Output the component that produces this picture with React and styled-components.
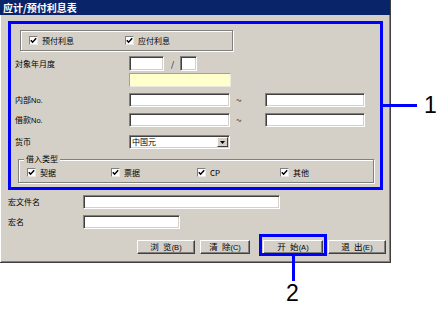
import React from 'react';
import styled, { createGlobalStyle } from 'styled-components';

const GlobalStyle = createGlobalStyle`
  html, body { margin: 0; padding: 0; background: #fff; }
  body { font-family: "Noto Sans CJK SC", "Noto Sans", sans-serif; color: #000; }
`;

const Page = styled.div`
  position: relative;
  width: 436px;
  height: 309px;
  background: #fff;
  overflow: hidden;
`;

const Window = styled.div`
  width: 391px;
  height: 263px;
  box-sizing: border-box;
  background: #d4d0c8;
  border-right: 1px solid #404040;
  border-bottom: 1px solid #404040;
  box-shadow: inset -1px -1px 0 #808080;
  display: flex;
  flex-direction: column;
`;

const TitleBar = styled.div`
  height: 15px;
  background: #0a246a;
  color: #fff;
  font-size: 10px;
  font-weight: bold;
  line-height: 15px;
  padding-left: 3px;
  white-space: nowrap;
`;

const Body = styled.div`
  flex: 1;
  border-left: 1px solid #fff;
  padding: 6px 0 0 7px;
  display: flex;
  flex-direction: column;
`;

const Highlight = styled.div`
  width: 375px;
  height: 169px;
  box-sizing: border-box;
  border: 3px solid #0000ff;
  padding: 6px 0 0 4px;
  display: flex;
  flex-direction: column;
`;

const CheckGroup = styled.div`
  width: 213px;
  height: 21px;
  box-sizing: border-box;
  margin-left: 5px;
  border: 1px solid #808080;
  box-shadow: 1px 1px 0 #fff, inset 1px 1px 0 #fff;
  display: flex;
  align-items: center;
  padding-left: 8px;
`;

const CheckItem = styled.div`
  width: ${p => p.$w}px;
  display: flex;
  align-items: center;
  gap: 4px;
  font-size: 8px;
  line-height: 10px;
  white-space: nowrap;
`;

const Box = styled.span`
  width: 9px;
  height: 9px;
  box-sizing: border-box;
  background: #fff;
  border: 1px solid;
  border-color: #808080 #e8e8e8 #e8e8e8 #808080;
  display: inline-flex;
  align-items: center;
  justify-content: center;
  flex: none;
`;

const Row = styled.div`
  display: flex;
  align-items: center;
  margin-top: ${p => p.$mt}px;
`;

const Label = styled.div`
  width: ${p => p.$w}px;
  flex: none;
  font-size: 8px;
  line-height: 10px;
  white-space: nowrap;
`;

const Small = styled.span`
  font-size: 7.5px;
  font-family: "Liberation Sans", sans-serif;
`;

const Field = styled.div`
  width: ${p => p.$w}px;
  height: ${p => p.$h || 14}px;
  box-sizing: border-box;
  background: #fff;
  border: 1px solid;
  border-color: #808080 #fff #fff #808080;
  box-shadow: inset 1px 1px 0 #404040, inset -1px -1px 0 #d4d0c8;
  flex: none;
`;

const YellowField = styled.div`
  width: ${p => p.$w}px;
  height: 14px;
  box-sizing: border-box;
  background: #ffffcc;
  border: 1px solid;
  border-color: #a0a0a0 #e8e8e0 #e8e8e0 #a0a0a0;
`;

const Sep = styled.div`
  width: ${p => p.$w}px;
  flex: none;
  font-size: ${p => p.$fs || 8}px;
  line-height: 10px;
  padding-left: ${p => p.$pl}px;
  box-sizing: border-box;
  color: ${p => p.$c || '#000'};
`;

const Select = styled(Field)`
  display: flex;
  align-items: center;
  justify-content: space-between;
  padding: 0 1px 0 2px;
  font-size: 8px;
  line-height: 10px;
`;

const DropBtn = styled.span`
  width: 11px;
  height: 10px;
  box-sizing: border-box;
  background: #d4d0c8;
  border: 1px solid;
  border-color: #fff #404040 #404040 #fff;
  display: flex;
  align-items: center;
  justify-content: center;
`;

const GroupBox = styled.div`
  position: relative;
  width: 356px;
  height: 24px;
  box-sizing: border-box;
  margin: 10px 0 0 3px;
  border: 1px solid #808080;
  box-shadow: 1px 1px 0 #fff, inset 1px 1px 0 #fff;
  display: flex;
  align-items: center;
  padding: 3px 0 0 8px;
`;

const Legend = styled.span`
  position: absolute;
  top: -6px;
  left: 5px;
  padding: 0 2px;
  background: #d4d0c8;
  font-size: 8px;
  line-height: 10px;
`;

const Buttons = styled.div`
  display: flex;
  align-items: center;
  margin: 11px 0 0 129px;
`;

const Button = styled.div`
  position: relative;
  width: ${p => p.$w}px;
  height: 14px;
  margin-left: ${p => p.$ml || 0}px;
  box-sizing: border-box;
  background: #d4d0c8;
  border: 1px solid;
  border-color: #fff #404040 #404040 #fff;
  box-shadow: inset -1px -1px 0 #808080;
  font-size: 8.5px;
  line-height: 11px;
  display: flex;
  align-items: center;
  justify-content: center;
  white-space: nowrap;
  flex: none;
`;

const ButtonMark = styled.span`
  position: absolute;
  left: -5px;
  right: -5px;
  top: -7px;
  bottom: -3px;
  border: 3px solid #0000ff;
`;

const CalloutLine = styled.div`
  position: absolute;
  left: ${p => p.$x}px;
  top: ${p => p.$y}px;
  width: ${p => p.$w}px;
  height: ${p => p.$h}px;
  background: #0000ff;
`;

const CalloutNum = styled.div`
  position: absolute;
  left: ${p => p.$x}px;
  top: ${p => p.$y}px;
  font-family: "Liberation Sans", Arial, sans-serif;
  font-size: 23px;
  line-height: 23px;
  color: #000;
`;

const Check = () => (
  <Box>
    <svg width="7" height="7" viewBox="0 0 7 7">
      <path d="M0.8 3.2 L2.6 5.2 L6.2 1.2" fill="none" stroke="#000" strokeWidth="1.5" />
    </svg>
  </Box>
);

const Checked = ({ w, children }) => (
  <CheckItem $w={w}>
    <Check />
    <span>{children}</span>
  </CheckItem>
);

const App = () => (
  <Page>
    <GlobalStyle />
    <Window>
      <TitleBar>应计/预付利息表</TitleBar>
      <Body>
        <Highlight>
          <CheckGroup>
            <Checked w={96}>预付利息</Checked>
            <Checked w={90}>应付利息</Checked>
          </CheckGroup>

          <Row $mt={5}>
            <Label $w={114}>対象年月度</Label>
            <Field $w={35} $h={15} />
            <Sep $w={16} $pl={7}>/</Sep>
            <Field $w={17} $h={15} />
          </Row>
          <Row $mt={2}>
            <Label $w={114} />
            <YellowField $w={102} />
          </Row>
          <Row $mt={6}>
            <Label $w={114}>内部<Small>No.</Small></Label>
            <Field $w={101} />
            <Sep $w={35} $pl={6} $fs={10} $c="#404040">~</Sep>
            <Field $w={100} />
          </Row>
          <Row $mt={6}>
            <Label $w={114}>借款<Small>No.</Small></Label>
            <Field $w={101} />
            <Sep $w={35} $pl={6} $fs={10} $c="#404040">~</Sep>
            <Field $w={100} />
          </Row>
          <Row $mt={8}>
            <Label $w={114}>货币</Label>
            <Select $w={101} $h={14}>
              <span>中国元</span>
              <DropBtn>
                <svg width="5" height="3" viewBox="0 0 5 3">
                  <path d="M0 0 H5 L2.5 3 Z" fill="#000" />
                </svg>
              </DropBtn>
            </Select>
          </Row>

          <GroupBox>
            <Legend>借入类型</Legend>
            <Checked w={84}>契据</Checked>
            <Checked w={86}>票据</Checked>
            <Checked w={83}>CP</Checked>
            <Checked w={60}>其他</Checked>
          </GroupBox>
        </Highlight>

        <Row $mt={5}>
          <Label $w={75}>宏文件名</Label>
          <Field $w={197} />
        </Row>
        <Row $mt={6}>
          <Label $w={75}>宏名</Label>
          <Field $w={97} />
        </Row>

        <Buttons>
          <Button $w={58}><span>浏&ensp;览<Small>(B)</Small></span></Button>
          <Button $w={50} $ml={5}><span>清&ensp;除<Small>(C)</Small></span></Button>
          <Button $w={60} $ml={13}>
            <span>开&ensp;始<Small>(A)</Small></span>
            <ButtonMark />
          </Button>
          <Button $w={58} $ml={5}><span>退&ensp;出<Small>(E)</Small></span></Button>
        </Buttons>
      </Body>
    </Window>

    <CalloutLine $x={383} $y={104} $w={34} $h={3} />
    <CalloutNum $x={424} $y={94}>1</CalloutNum>
    <CalloutLine $x={292} $y={256} $w={3} $h={25} />
    <CalloutNum $x={286} $y={282}>2</CalloutNum>
  </Page>
);

export default App;
